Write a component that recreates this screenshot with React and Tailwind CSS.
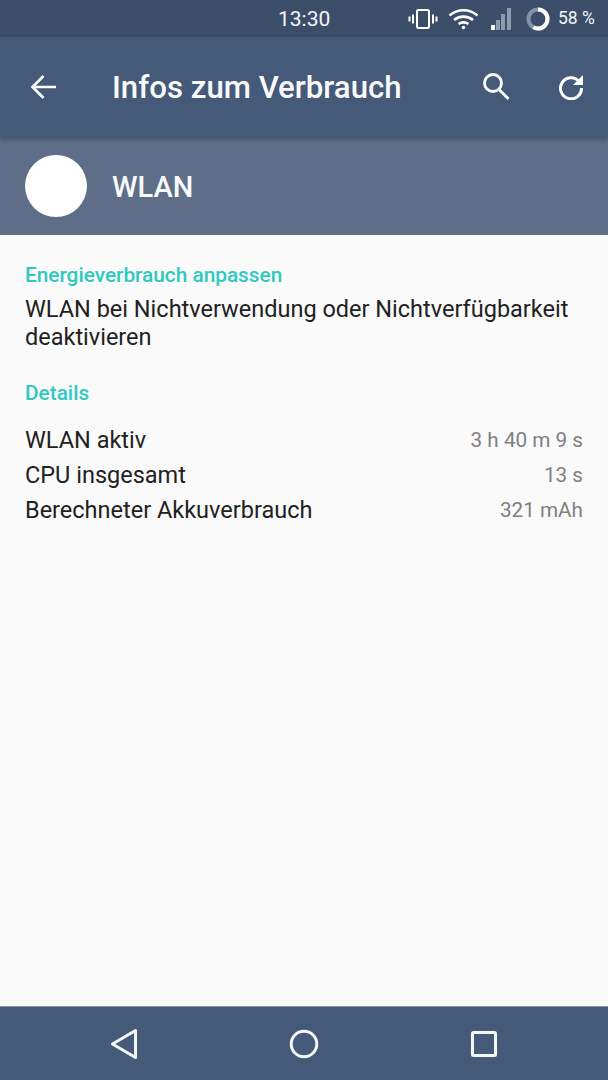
export default function App() {
  const rows = [
    ["WLAN aktiv", "3 h 40 m 9 s"],
    ["CPU insgesamt", "13 s"],
    ["Berechneter Akkuverbrauch", "321 mAh"],
  ];
  return (
    <div className="w-[608px] h-[1080px] flex flex-col bg-[#fafafa] overflow-hidden font-['Roboto',sans-serif]">
      {/* status bar */}
      <div className="h-[37px] shrink-0 bg-[#3c4d69] relative z-20 flex items-center text-white">
        <span className="ml-[278px] w-[60px] mt-[1px] text-[21px] leading-none text-[#f3f5f8]">13:30</span>
        <svg className="ml-[70px]" width="30" height="22" viewBox="0 0 30 22" fill="none" stroke="#fff" strokeWidth="2">
          <rect x="9" y="2" width="12" height="18" rx="1.5" />
          <path d="M5 6.5v9M1.5 8.5v5M25 6.5v9M28.5 8.5v5" />
        </svg>
        <svg className="ml-[10px]" width="31" height="22" viewBox="0 0 31 22" fill="none" stroke="#fff" strokeWidth="2.6">
          <path d="M1.5 7.5C9.5 .5 21.5 .5 29.5 7.5M6 12c5.500-4.500 13.500-4.500 19 0M10.500 16c3-2 7-2 10 0" />
          <circle cx="15.500" cy="19.500" r="1.800" fill="#fff" stroke="none" />
        </svg>
        <svg className="ml-[11px]" width="23" height="24" viewBox="0 0 23 24">
          <rect x="1" y="18" width="4" height="5" fill="#fff" />
          <rect x="6" y="13" width="4" height="10" fill="#8f9bad" />
          <rect x="11" y="7" width="4" height="16" fill="#8f9bad" />
          <rect x="17" y="1" width="4" height="22" fill="#8f9bad" />
        </svg>
        <svg className="ml-[13px]" width="24" height="24" viewBox="0 0 24 24" fill="none" strokeWidth="4">
          <circle cx="12" cy="12" r="9.500" stroke="#8492a6" />
          <circle cx="12" cy="12" r="9.500" stroke="#fff" pathLength="100" strokeDasharray="58 100" transform="rotate(-90 12 12)" />
        </svg>
        <span className="ml-[8px] text-[17.5px] leading-none text-[#f3f5f8] whitespace-nowrap">58 %</span>
      </div>
      {/* toolbar */}
      <div className="h-[100px] shrink-0 bg-[#455a78] relative z-10 flex items-center shadow-[0_2px_5px_rgba(0,0,0,0.3)] text-white">
        <svg className="ml-[30px]" width="27" height="26" viewBox="0 0 27 26" fill="none" stroke="#fff" strokeWidth="2.600">
          <path d="M26 13H3M13.500 2 2.500 13l11 11" />
        </svg>
        <span className="ml-[55px] mt-[2px] w-[288px] text-[31.2px] leading-none font-medium text-[#f8f9fb] whitespace-nowrap">Infos zum Verbrauch</span>
        <svg className="ml-[82px] mb-[1px]" width="28" height="29" viewBox="0 0 28 29" fill="none" stroke="#fff" strokeWidth="2.800">
          <circle cx="11" cy="11" r="8.500" />
          <path d="m17 17.500 9.500 9.500" />
        </svg>
        <svg className="ml-[48px] mb-[1px]" width="26" height="27" viewBox="0 0 26 27" fill="none">
          <path d="M21 8.500A10.500 10.500 0 1 0 23.500 15" stroke="#fff" strokeWidth="3" />
          <path d="M25 2v10H15z" fill="#fff" />
        </svg>
      </div>
      {/* app header */}
      <div className="h-[98px] shrink-0 bg-[#5e6e89] flex items-center">
        <div className="ml-[25px] w-[62px] h-[62px] rounded-full bg-white" />
        <span className="ml-[25px] mt-[2px] text-[29px] leading-none font-medium text-[#f8f9fb]">WLAN</span>
      </div>
      {/* content */}
      <div className="flex-1 px-[25px] pt-[28px]">
        <div className="text-[20.8px] leading-[24px] font-medium text-[#2fc9c0]">Energieverbrauch anpassen</div>
        <div className="mt-[8px] text-[23.5px] leading-[28px] text-[#212121]">
          WLAN bei Nichtverwendung oder Nichtverfügbarkeit deaktivieren
        </div>
        <div className="mt-[30px] text-[20.8px] leading-[24px] font-medium text-[#2fc9c0]">Details</div>
        <div className="mt-[18px] flex flex-col">
          {rows.map(([a, b]) => (
            <div key={a} className="h-[35px] flex items-center justify-between">
              <span className="text-[23.5px] text-[#212121]">{a}</span>
              <span className="text-[20.7px] text-[#808080]">{b}</span>
            </div>
          ))}
        </div>
      </div>
      {/* nav bar */}
      <div className="h-[74px] shrink-0 bg-[#455a78] border-t border-[#8a97a8] flex items-center">
        <svg className="ml-[110px]" width="28" height="32" viewBox="0 0 28 32" fill="none" stroke="#f4f7fa" strokeWidth="3" strokeLinejoin="round">
          <path d="M25.500 2.500v27L2.500 16z" />
        </svg>
        <svg className="ml-[151px]" width="30" height="30" viewBox="0 0 30 30" fill="none" stroke="#f4f7fa" strokeWidth="3">
          <circle cx="15" cy="15" r="12.800" />
        </svg>
        <svg className="ml-[152px]" width="26" height="26" viewBox="0 0 26 26" fill="none" stroke="#f4f7fa" strokeWidth="3" strokeLinejoin="round">
          <rect x="1.500" y="1.500" width="23" height="23" rx="1" />
        </svg>
      </div>
    </div>
  );
}
